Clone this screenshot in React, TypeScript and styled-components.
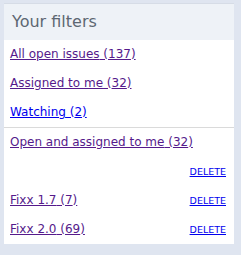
import styled, { createGlobalStyle } from "styled-components";

const GlobalStyle = createGlobalStyle`
  html, body {
    margin: 0;
    padding: 0;
    background: #dfe5f0;
  }
  body {
    font-family: "DejaVu Sans", Verdana, sans-serif;
  }
`;

interface Filter {
  name: string;
  count: number;
  visited?: boolean;
  deletable?: boolean;
}

const defaultFilters: Filter[] = [
  { name: "All open issues", count: 137, visited: true },
  { name: "Assigned to me", count: 32, visited: true },
  { name: "Watching", count: 2 },
];

const savedFilters: Filter[] = [
  { name: "Open and assigned to me", count: 32, visited: true, deletable: true },
  { name: "Fixx 1.7", count: 7, visited: true, deletable: true },
  { name: "Fixx 2.0", count: 69, visited: true, deletable: true },
];

const App = () => {
  return (
    <>
      <GlobalStyle />
      <Page>
        <Panel>
          <Header>Your filters</Header>
          <List>
            {defaultFilters.map((f) => (
              <Row key={f.name}>
                <FilterLink href="#" $visited={f.visited}>
                  {f.name} ({f.count})
                </FilterLink>
              </Row>
            ))}
          </List>
          <List $divided>
            {savedFilters.map((f) => (
              <Row key={f.name}>
                <FilterLink href="#" $visited={f.visited}>
                  {f.name} ({f.count})
                </FilterLink>
                {f.deletable && <DeleteLink href="#">DELETE</DeleteLink>}
              </Row>
            ))}
          </List>
        </Panel>
      </Page>
    </>
  );
};

const Page = styled.div`
  width: 241px;
  height: 255px;
  padding: 3px 7px 0 4px;
  box-sizing: border-box;
`;
const Panel = styled.div`
  background: #fff;
  border-top: 1px solid #d6dce6;
`;
const Header = styled.div`
  height: 36px;
  line-height: 36px;
  padding-left: 8px;
  background: #eef2f7;
  color: #5d6772;
  font-size: 16px;
`;
const List = styled.ul<{ $divided?: boolean }>`
  list-style: none;
  margin: 0;
  padding: 0 8px 0 6px;
  ${(p) => p.$divided && `border-top: 1px solid #dadada;`}
`;
const Row = styled.li`
  display: flex;
  flex-wrap: wrap;
  align-items: baseline;
  line-height: 29px;
`;
const FilterLink = styled.a<{ $visited?: boolean }>`
  font-size: 12px;
  color: ${(p) => (p.$visited ? "#551a8b" : "#0000ee")};
  text-decoration: underline;
`;
const DeleteLink = styled.a`
  margin-left: auto;
  font-size: 9.5px;
  color: #0000ee;
  text-decoration: underline;
`;

export default App;
